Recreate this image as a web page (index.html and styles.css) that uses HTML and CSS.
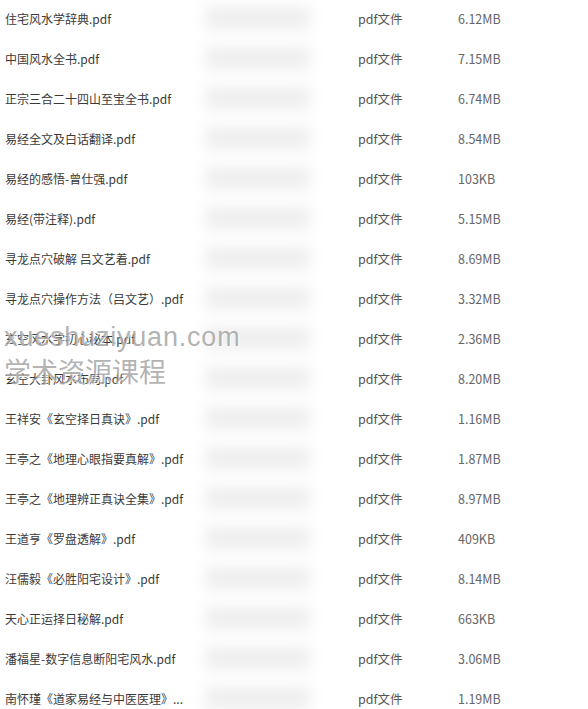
FILE: index.html
```html
<!DOCTYPE html>
<html lang="zh">
<head>
<meta charset="utf-8">
<link rel="stylesheet" href="styles.css">
</head>
<body>
<div class="list">
  <div class="row"><span class="name">住宅风水学辞典.pdf</span><span class="blur"></span><span class="type">pdf文件</span><span class="size">6.12MB</span></div>
  <div class="row"><span class="name">中国风水全书.pdf</span><span class="blur"></span><span class="type">pdf文件</span><span class="size">7.15MB</span></div>
  <div class="row"><span class="name">正宗三合二十四山至宝全书.pdf</span><span class="blur"></span><span class="type">pdf文件</span><span class="size">6.74MB</span></div>
  <div class="row"><span class="name">易经全文及白话翻译.pdf</span><span class="blur"></span><span class="type">pdf文件</span><span class="size">8.54MB</span></div>
  <div class="row"><span class="name">易经的感悟-曾仕强.pdf</span><span class="blur"></span><span class="type">pdf文件</span><span class="size">103KB</span></div>
  <div class="row"><span class="name">易经(带注释).pdf</span><span class="blur"></span><span class="type">pdf文件</span><span class="size">5.15MB</span></div>
  <div class="row"><span class="name">寻龙点穴破解 吕文艺着.pdf</span><span class="blur"></span><span class="type">pdf文件</span><span class="size">8.69MB</span></div>
  <div class="row"><span class="name">寻龙点穴操作方法（吕文艺）.pdf</span><span class="blur"></span><span class="type">pdf文件</span><span class="size">3.32MB</span></div>
  <div class="row"><span class="name">玄空风水学初心秘本.pdf</span><span class="blur"></span><span class="type">pdf文件</span><span class="size">2.36MB</span></div>
  <div class="row"><span class="name">玄空大卦风水布局.pdf</span><span class="blur"></span><span class="type">pdf文件</span><span class="size">8.20MB</span></div>
  <div class="row"><span class="name">王祥安《玄空择日真诀》.pdf</span><span class="blur"></span><span class="type">pdf文件</span><span class="size">1.16MB</span></div>
  <div class="row"><span class="name">王亭之《地理心眼指要真解》.pdf</span><span class="blur"></span><span class="type">pdf文件</span><span class="size">1.87MB</span></div>
  <div class="row"><span class="name">王亭之《地理辨正真诀全集》.pdf</span><span class="blur"></span><span class="type">pdf文件</span><span class="size">8.97MB</span></div>
  <div class="row"><span class="name">王道亨《罗盘透解》.pdf</span><span class="blur"></span><span class="type">pdf文件</span><span class="size">409KB</span></div>
  <div class="row"><span class="name">汪儒毅《必胜阳宅设计》.pdf</span><span class="blur"></span><span class="type">pdf文件</span><span class="size">8.14MB</span></div>
  <div class="row"><span class="name">天心正运择日秘解.pdf</span><span class="blur"></span><span class="type">pdf文件</span><span class="size">663KB</span></div>
  <div class="row"><span class="name">潘福星-数字信息断阳宅风水.pdf</span><span class="blur"></span><span class="type">pdf文件</span><span class="size">3.06MB</span></div>
  <div class="row"><span class="name">南怀瑾《道家易经与中医医理》...</span><span class="blur"></span><span class="type">pdf文件</span><span class="size">1.19MB</span></div>
</div>
<div class="watermark">
  <div class="wm-url">xueshuziyuan.com</div>
  <div class="wm-cn">学术资源课程</div>
</div>
</body>
</html>
```

FILE: styles.css
```css
html, body {
  margin: 0;
  padding: 0;
  background: #ffffff;
  overflow: hidden;
}
body {
  font-family: "Noto Sans CJK SC", "Noto Sans", sans-serif;
  font-size: 12px;
  position: relative;
  width: 588px;
  height: 709px;
}
.list {
  display: flex;
  flex-direction: column;
}
.row {
  display: flex;
  align-items: center;
  height: 40px;
  margin-top: -2px;
  margin-bottom: 2px;
}
.name {
  width: 200px;
  padding-left: 5px;
  box-sizing: border-box;
  color: #3a3a3a;
  white-space: nowrap;
}
.blur {
  width: 105px;
  height: 24px;
  margin-left: 5px;
  background: #efefef;
  filter: blur(7px);
}
.type {
  margin-left: 48px;
  width: 100px;
  font-size: 12.5px;
  color: #555555;
}
.size {
  font-size: 12.5px;
  color: #666666;
}
.watermark {
  position: absolute;
  left: 4px;
  top: 321px;
  pointer-events: none;
}
.wm-url {
  font-family: "Liberation Sans", Arial, sans-serif;
  font-size: 27px;
  line-height: 33px;
  color: rgba(145, 145, 145, 0.7);
  letter-spacing: 0.8px;
  text-shadow: 1px 1px 1px rgba(255,255,255,0.8);
}
.wm-cn {
  font-family: "Noto Sans CJK SC", sans-serif;
  font-size: 27px;
  line-height: 34px;
  color: rgba(145, 145, 145, 0.7);
  text-shadow: 1px 1px 1px rgba(255,255,255,0.8);
}
```
